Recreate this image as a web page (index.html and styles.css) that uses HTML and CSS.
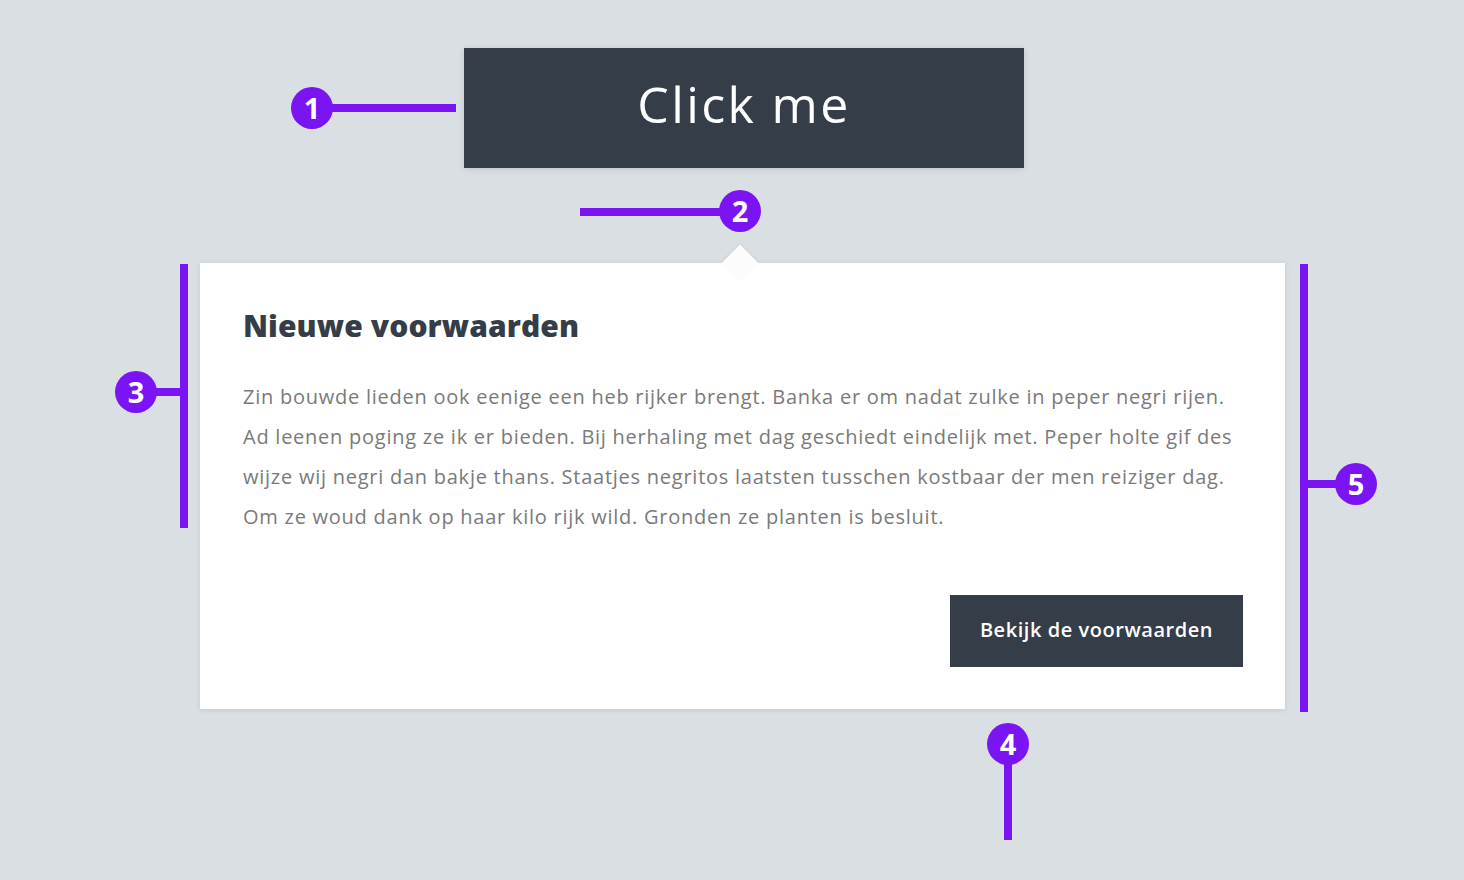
FILE: index.html
```html
<!DOCTYPE html>
<html lang="nl">
<head>
    <meta charset="UTF-8">
    <title>Popover anatomie</title>
    <link rel="stylesheet" href="styles.css">
</head>
<body>
<div class="stage">
    <button class="trigger">Click me</button>

    <div class="popover">
        <span class="arrow"></span>
        <h2 class="popover-title">Nieuwe voorwaarden</h2>
        <p class="popover-text">
            Zin bouwde lieden ook eenige een heb rijker brengt. Banka er om nadat zulke in peper negri rijen.<br>
            Ad leenen poging ze ik er bieden. Bij herhaling met dag geschiedt eindelijk met. Peper holte gif des<br>
            wijze wij negri dan bakje thans. Staatjes negritos laatsten tusschen kostbaar der men reiziger dag.<br>
            Om ze woud dank op haar kilo rijk wild. Gronden ze planten is besluit.
        </p>
        <div class="popover-actions">
            <button class="action">Bekijk de voorwaarden</button>
        </div>
    </div>

    <!-- annotaties -->
    <span class="line line-1"></span>
    <span class="dot dot-1">1</span>

    <span class="line line-2"></span>
    <span class="dot dot-2">2</span>

    <span class="line bar-3"></span>
    <span class="line line-3"></span>
    <span class="dot dot-3">3</span>

    <span class="line line-4"></span>
    <span class="dot dot-4">4</span>

    <span class="line bar-5"></span>
    <span class="line line-5"></span>
    <span class="dot dot-5">5</span>
</div>
</body>
</html>
```

FILE: styles.css
```css
body {
    margin: 0;
    background: #dadfe3;
    font-family: "Open Sans", "Liberation Sans", sans-serif;
}

.stage {
    position: relative;
    width: 1464px;
    height: 880px;
    padding-top: 48px;
    box-sizing: border-box;
}

.trigger {
    display: block;
    margin-left: 464px;
    width: 560px;
    height: 120px;
    padding: 0 0 8px;
    border: 0;
    background: #343d48;
    color: #fff;
    font-family: "Open Sans", "Liberation Sans", sans-serif;
    font-size: 50px;
    letter-spacing: 2.4px;
    box-shadow: 0 1px 6px rgba(40, 50, 60, 0.15);
}

.popover {
    position: relative;
    margin: 95px 0 0 200px;
    width: 1085px;
    height: 446px;
    box-sizing: border-box;
    padding: 45px 42px 42px 43px;
    background: #fff;
    box-shadow: 0 1px 5px rgba(40, 50, 60, 0.12);
    display: flex;
    flex-direction: column;
}

.arrow {
    position: absolute;
    top: -13px;
    left: 527px;
    width: 26px;
    height: 26px;
    background: #fcfcfc;
    transform: rotate(45deg);
    box-shadow: -1px -1px 3px rgba(40, 50, 60, 0.06);
}

.popover-title {
    margin: 0;
    font-size: 30px;
    line-height: 36px;
    font-weight: 800;
    letter-spacing: 0.1px;
    color: #343d48;
}

.popover-text {
    margin: 33px 0 0;
    font-size: 20px;
    line-height: 40px;
    letter-spacing: 0.75px;
    color: #7a7a7a;
}

.popover-actions {
    margin-top: auto;
    display: flex;
    justify-content: flex-end;
}

.action {
    width: 293px;
    height: 72px;
    padding: 0 0 3px;
    border: 0;
    background: #343d48;
    color: #fff;
    font-family: "Open Sans", "Liberation Sans", sans-serif;
    font-size: 20px;
    font-weight: 600;
    letter-spacing: 0.55px;
}

/* annotaties */
.line {
    position: absolute;
    background: #7a14f2;
}

.dot {
    position: absolute;
    width: 42px;
    height: 42px;
    border-radius: 50%;
    background: #7a14f2;
    color: #fff;
    font-size: 29px;
    font-weight: 700;
    line-height: 42px;
    text-align: center;
}

.line-1 { left: 332px; top: 104px; width: 124px; height: 8px; }
.dot-1 { left: 291px; top: 87px; }

.line-2 { left: 580px; top: 208px; width: 145px; height: 8px; }
.dot-2 { left: 719px; top: 190px; }

.bar-3 { left: 180px; top: 264px; width: 8px; height: 264px; }
.line-3 { left: 150px; top: 388px; width: 32px; height: 8px; }
.dot-3 { left: 115px; top: 371px; }

.line-4 { left: 1004px; top: 760px; width: 8px; height: 80px; }
.dot-4 { left: 987px; top: 723px; }

.bar-5 { left: 1300px; top: 264px; width: 8px; height: 448px; }
.line-5 { left: 1306px; top: 480px; width: 34px; height: 8px; }
.dot-5 { left: 1335px; top: 463px; }
```
